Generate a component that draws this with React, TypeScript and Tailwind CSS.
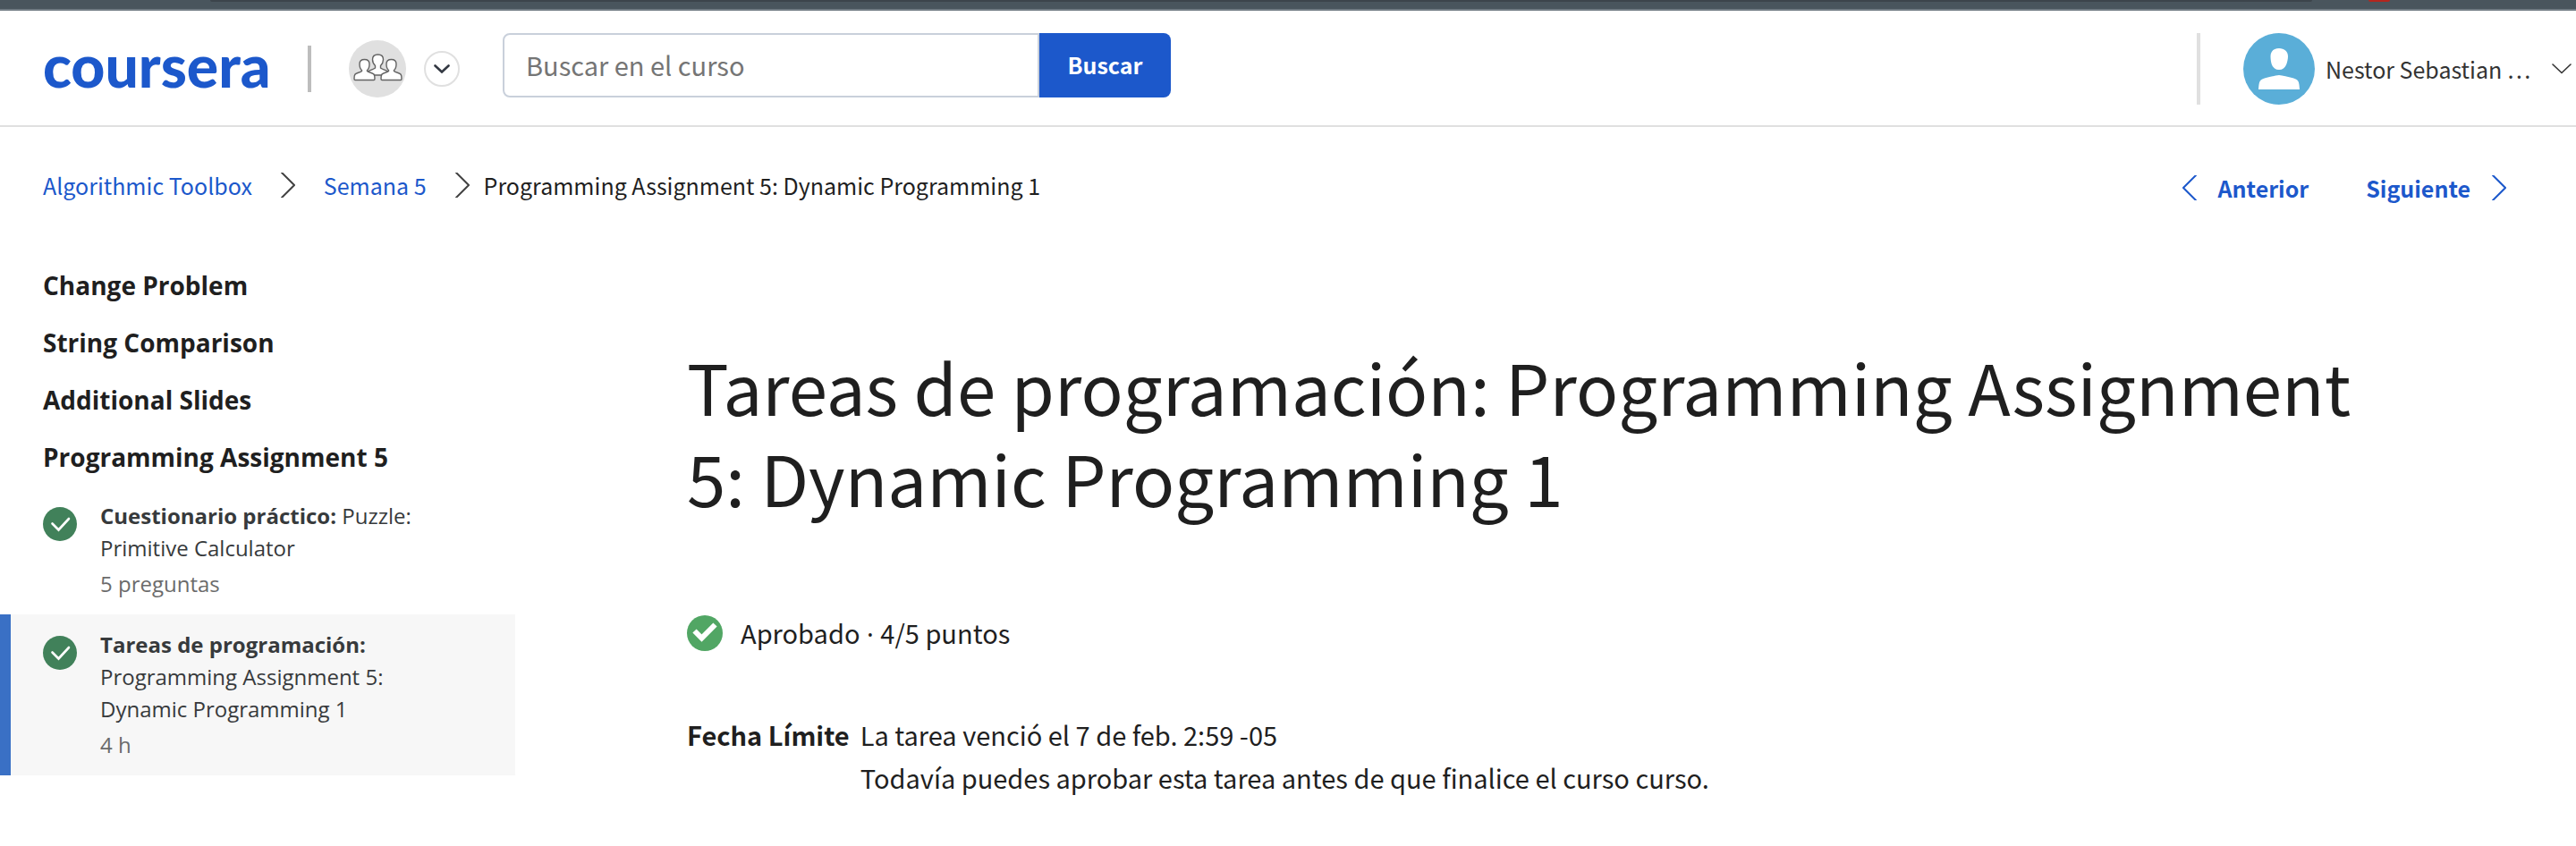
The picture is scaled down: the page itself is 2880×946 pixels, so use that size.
import React from "react";

type ChevronProps = { className?: string; direction: "left" | "right" };

function ThinChevron({ className = "", direction }: ChevronProps) {
  return (
    <svg
      viewBox="0 0 16 28"
      aria-hidden="true"
      className={`h-7 w-4 shrink-0 ${className}`}
      fill="none"
      stroke="currentColor"
      strokeWidth="2"
      strokeLinecap="round"
    >
      <path d={direction === "left" ? "M15 0 1 14l14 14" : "M1 0l14 14L1 28"} />
    </svg>
  );
}

function GroupIcon() {
  return (
    <svg viewBox="0 0 64 64" aria-hidden="true" className="size-16" fill="#fff" stroke="#636363" strokeWidth="1.4">
      <path d="M21 35.500c1-2 7-3 8.500-4.500V28.500c-2-2-3-4-3-7 0-3.500 2-5.500 6-5.500s6 2 6 5.500c0 3-1 5-3 7V31c1.500 1.500 7.500 2.500 8.500 4.500l-8 3.500H29z" />
      <path d="M7 44.500c-1 0-1-.5-1-1.500 0-5 1-5.500 4-6.500 2-.7 4-1.500 4.500-2v-1c-2-1.500-2.500-4-2.500-7 0-3.500 2-5 5.500-5s5.500 1.500 5.500 5c0 3-.5 5.500-2.500 7v1c.5.5 2.500 1.300 4.500 2 3 1 4 1.500 4 6.500 0 1 0 1.500-1 1.500z" />
      <path d="M37 44.500c-1 0-1-.5-1-1.500 0-5 1-5.500 4-6.500 2-.7 4-1.500 4.500-2v-1c-2-1.500-2.500-4-2.500-7 0-3.500 2-5 5.500-5s5.500 1.500 5.500 5c0 3-.5 5.500-2.500 7v1c.5.5 2.500 1.300 4.500 2 3 1 4 1.500 4 6.500 0 1 0 1.500-1 1.500z" />
    </svg>
  );
}

function Avatar() {
  return (
    <svg viewBox="0 0 80 80" aria-hidden="true" className="size-20 shrink-0">
      <circle cx="40" cy="40" r="40" fill="#5aaed8" />
      <path
        fill="#fff"
        d="M40 17c6 0 10 3.500 10 9 0 3-1 7-2 9.500C46.500 39 44 41 40 41s-6.500-2-8-5.500C31 33 30.500 29 30.500 26c0-5.500 3.500-9 9.500-9zM17 63c.3-4 .5-7 1.500-9s3-3 6-3.800C30 49 36 47.500 40 47c4 .5 10 2 15.500 3.200 3 .8 5 1.800 6 3.800s1.200 5 1.500 9z"
      />
    </svg>
  );
}

function DoneIcon() {
  return (
    <svg viewBox="0 0 38 38" role="img" aria-label="Completado" className="mt-2 size-[38px] shrink-0">
      <circle cx="19" cy="19" r="19" fill="#41815a" />
      <path d="M10.500 18.500l7 7L29 13" fill="none" stroke="#fff" strokeWidth="2.600" strokeLinecap="round" />
    </svg>
  );
}

function Header() {
  return (
    <header className="flex items-center border-b-2 border-[#e0e0e0] bg-white pt-[25px] pb-[23px] pl-12">
      <a href="#inicio" className="w-64 pb-2 font-['Lato',sans-serif] text-[66px] leading-[72px] font-black text-[#1c58cb]">
        coursera
      </a>
      <div className="ml-10 h-[52px] w-1 bg-[#bdbdbd]" />
      <div className="ml-[42px] rounded-full bg-[#e0e0e0]">
        <GroupIcon />
      </div>
      <button
        type="button"
        aria-label="Cambiar de programa"
        className="ml-5 flex size-10 items-center justify-center rounded-full border-2 border-[#e0e0e0]"
      >
        <svg viewBox="0 0 18 10" className="h-[10px] w-[18px]" fill="none" stroke="#333842" strokeWidth="2.600" strokeLinecap="round">
          <path d="M1.500 1.500 9 8.500l7.500-7" />
        </svg>
      </button>
      <form role="search" className="mb-2 ml-12 flex h-[72px]">
        <input
          type="search"
          aria-label="Buscar en el curso"
          placeholder="Buscar en el curso"
          className="w-[600px] rounded-l-lg border-2 border-[#c9d0db] px-6 text-[29px] placeholder:text-[#757575] focus:outline-none"
        />
        <button type="button" className="w-[147px] rounded-r-lg bg-[#1c58cb] text-[25px] font-bold text-white">
          Buscar
        </button>
      </form>
      <div className="ml-auto h-20 w-1 bg-[#e0e0e0]" />
      <button type="button" className="ml-12 flex items-center pr-1 text-[25px] leading-10 text-[#333]">
        <Avatar />
        <span className="ml-3 w-[252px] truncate text-left">Nestor Sebastian …</span>
        <svg viewBox="0 0 24 12" aria-hidden="true" className="h-3 w-6 shrink-0" fill="none" stroke="currentColor" strokeWidth="1.600" strokeLinecap="round">
          <path d="M2 1l10 9.500L22 1" />
        </svg>
      </button>
    </header>
  );
}

function NavigationBar() {
  return (
    <div className="flex items-start justify-between pt-[45px] pr-[78px] pl-12">
      <nav aria-label="Ruta de navegación" className="flex h-10 items-center text-[25px] leading-10 text-[#1f1f1f]">
        <a href="#curso" className="text-[#1c58cb]">Algorithmic Toolbox</a>
        <ThinChevron direction="right" className="ml-8 text-[#424242]" />
        <a href="#semana" className="ml-8 text-[#1c58cb]">Semana 5</a>
        <ThinChevron direction="right" className="ml-8 text-[#424242]" />
        <span className="ml-4">Programming Assignment 5: Dynamic Programming 1</span>
      </nav>
      <nav aria-label="Elementos" className="mt-[3px] flex h-10 items-center gap-16 text-[25px] leading-10 font-bold text-[#1c58cb]">
        <a href="#anterior" className="flex items-center gap-6">
          <ThinChevron direction="left" />
          Anterior
        </a>
        <a href="#siguiente" className="flex items-center gap-6">
          Siguiente
          <ThinChevron direction="right" />
        </a>
      </nav>
    </div>
  );
}

type LessonItem = { kind: string; title: string; meta: string; active?: boolean };

const sections = ["Change Problem", "String Comparison", "Additional Slides", "Programming Assignment 5"];

const items: LessonItem[] = [
  { kind: "Cuestionario práctico:", title: "Puzzle: Primitive Calculator", meta: "5 preguntas" },
  {
    kind: "Tareas de programación:",
    title: "Programming Assignment 5: Dynamic Programming 1",
    meta: "4 h",
    active: true,
  },
];

function Sidebar() {
  return (
    <aside className="w-[576px] shrink-0 font-['Open_Sans',sans-serif]">
      {sections.map((name) => (
        <h2 key={name} className="pl-12 text-[28px] leading-[64px] font-bold text-[#1f1f1f]">
          {name}
        </h2>
      ))}
      <ul className="text-[24px] leading-9">
        {items.map((item) => (
          <li key={item.kind}>
            <a
              href="#elemento"
              aria-current={item.active ? "page" : undefined}
              className={`flex gap-[26px] border-l-[12px] py-4 pr-24 pl-9 text-[#373a3c] ${
                item.active ? "border-[#3a70c5] bg-[#f7f7f7]" : "border-transparent"
              }`}
            >
              <DoneIcon />
              <span>
                <span className="block">
                  <strong className="font-bold">{item.kind}</strong> {item.title}
                </span>
                <span className="mt-1 block text-[#6b6b6b]">{item.meta}</span>
              </span>
            </a>
          </li>
        ))}
      </ul>
    </aside>
  );
}

function Assignment() {
  return (
    <main className="min-w-0 flex-1 pt-[93px] pr-48 pl-48 text-[29px] leading-[48px] text-[#1f1f1f]">
      <h1 className="text-[78px] leading-[102px]">
        Tareas de programación: Programming Assignment 5: Dynamic Programming 1
      </h1>
      <div className="mt-[99px] flex items-center gap-5">
        <svg viewBox="0 0 40 40" aria-hidden="true" className="size-10 shrink-0">
          <circle cx="20" cy="20" r="20" fill="#51a664" />
          <path d="M8.500 17.500l8 8L31.500 10.500" fill="none" stroke="#fff" strokeWidth="6" />
        </svg>
        <p>
          Aprobado<span className="font-['Noto_Sans',sans-serif]"> · </span>4/5 puntos
        </p>
      </div>
      <dl className="mt-16 flex gap-3">
        <dt className="font-bold">Fecha Límite</dt>
        <dd>
          <p>La tarea venció el 7 de feb. 2:59 -05</p>
          <p>Todavía puedes aprobar esta tarea antes de que finalice el curso curso.</p>
        </dd>
      </dl>
    </main>
  );
}

export default function App() {
  return (
    <div className="min-h-screen bg-white font-['Noto_Sans_CJK_SC',sans-serif]">
      <div className="flex h-3 items-start border-b-2 border-[#717c84] bg-[#49555d] pl-[235px]">
        <div className="h-[2px] w-[2350px] rounded-b bg-[#3c444b]" />
        <div className="ml-[63px] h-[2px] w-6 rounded-b bg-[#b3261e]" />
      </div>
      <Header />
      <NavigationBar />
      <div className="mt-[57px] flex items-start">
        <Sidebar />
        <Assignment />
      </div>
    </div>
  );
}
